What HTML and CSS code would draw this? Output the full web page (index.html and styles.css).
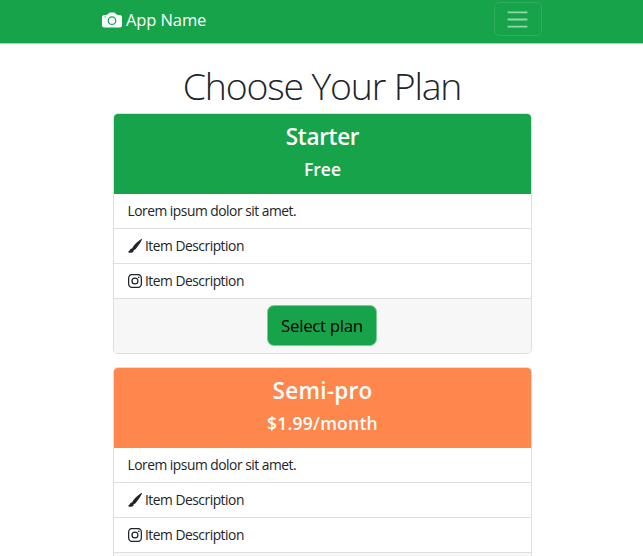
FILE: index.html
```html
<!DOCTYPE html>
<html lang="en">
<head>
<meta charset="utf-8">
<title>App Name</title>
<link rel="stylesheet" href="styles.css">
</head>
<body>
<svg class="sprite" aria-hidden="true">
  <symbol id="camera" viewBox="0 0 16 16"><path d="M10.5 8.5a2.5 2.5 0 1 1-5 0 2.5 2.5 0 0 1 5 0"/><path d="M2 4a2 2 0 0 0-2 2v6a2 2 0 0 0 2 2h12a2 2 0 0 0 2-2V6a2 2 0 0 0-2-2h-1.172a2 2 0 0 1-1.414-.586l-.828-.828A2 2 0 0 0 9.172 2H6.828a2 2 0 0 0-1.414.586l-.828.828A2 2 0 0 1 3.172 4zm.5 2a.5.5 0 1 1 0-1 .5.5 0 0 1 0 1m9 2.5a3.5 3.5 0 1 1-7 0 3.5 3.5 0 0 1 7 0"/></symbol>
  <symbol id="brush" viewBox="0 0 16 16"><path d="M15.825.12a.5.5 0 0 1 .132.584c-1.53 3.43-4.743 8.17-7.095 10.64a6.1 6.1 0 0 1-2.373 1.534c-.018.227-.06.538-.16.868-.201.659-.667 1.479-1.708 1.74a8.1 8.1 0 0 1-3.078.132 4 4 0 0 1-.562-.135 1.4 1.4 0 0 1-.466-.247.7.7 0 0 1-.204-.288.62.62 0 0 1 .004-.443c.095-.245.316-.38.461-.452.394-.197.625-.453.867-.826.095-.144.184-.297.287-.472l.117-.198c.151-.255.326-.54.546-.848.528-.739 1.201-.925 1.746-.896q.19.012.348.048c.062-.172.142-.38.238-.608.261-.619.658-1.419 1.187-2.069 2.176-2.67 6.18-6.206 9.117-8.104a.5.5 0 0 1 .596.04"/></symbol>
  <symbol id="instagram" viewBox="0 0 16 16"><path d="M8 0C5.829 0 5.556.01 4.703.048 3.85.088 3.269.222 2.76.42a3.9 3.9 0 0 0-1.417.923A3.9 3.9 0 0 0 .42 2.76C.222 3.268.087 3.85.048 4.7.01 5.555 0 5.827 0 8.001c0 2.172.01 2.444.048 3.297.04.852.174 1.433.372 1.942.205.526.478.972.923 1.417.444.445.89.719 1.416.923.51.198 1.09.333 1.942.372C5.555 15.99 5.827 16 8 16s2.444-.01 3.298-.048c.851-.04 1.434-.174 1.943-.372a3.9 3.9 0 0 0 1.416-.923c.445-.445.718-.891.923-1.417.197-.509.332-1.09.372-1.942C15.99 10.445 16 10.173 16 8s-.01-2.445-.048-3.299c-.04-.851-.175-1.433-.372-1.941a3.9 3.9 0 0 0-.923-1.417A3.9 3.9 0 0 0 13.24.42c-.51-.198-1.092-.333-1.943-.372C10.443.01 10.172 0 7.998 0zm-.717 1.442h.718c2.136 0 2.389.007 3.232.046.78.035 1.204.166 1.486.275.373.145.64.319.92.599s.453.546.598.92c.11.281.24.705.275 1.485.039.843.047 1.096.047 3.231s-.008 2.389-.047 3.232c-.035.78-.166 1.203-.275 1.485a2.5 2.5 0 0 1-.599.919c-.28.28-.546.453-.92.598-.28.11-.704.24-1.485.276-.843.038-1.096.047-3.232.047s-2.39-.009-3.233-.047c-.78-.036-1.203-.166-1.485-.276a2.5 2.5 0 0 1-.92-.598 2.5 2.5 0 0 1-.6-.92c-.109-.281-.24-.705-.275-1.485-.038-.843-.046-1.096-.046-3.233s.008-2.388.046-3.231c.036-.78.166-1.204.276-1.486.145-.373.319-.64.599-.92s.546-.453.92-.598c.282-.11.705-.24 1.485-.276.738-.034 1.024-.044 2.515-.045zm4.988 1.328a.96.96 0 1 0 0 1.92.96.96 0 0 0 0-1.92m-4.27 1.122a4.109 4.109 0 1 0 0 8.217 4.109 4.109 0 0 0 0-8.217m0 1.441a2.667 2.667 0 1 1 0 5.334 2.667 2.667 0 0 1 0-5.334"/></symbol>
</svg>
<nav class="navbar">
  <div class="navbar-inner">
    <a class="brand"><svg class="brand-icon"><use href="#camera"/></svg><span>App Name</span></a>
    <button class="toggler" aria-label="Toggle navigation"><svg viewBox="0 0 30 30"><path d="M4 7h22M4 15h22M4 23h22"/></svg></button>
  </div>
</nav>
<main class="plans">
  <h1 class="title">Choose Your Plan</h1>
  <section class="card">
    <header class="card-header starter">
      <h2>Starter</h2>
      <h3>Free</h3>
    </header>
    <ul class="features">
      <li>Lorem ipsum dolor sit amet.</li>
      <li><svg class="icon"><use href="#brush"/></svg><span>Item Description</span></li>
      <li><svg class="icon"><use href="#instagram"/></svg><span>Item Description</span></li>
    </ul>
    <footer class="card-footer"><button class="select">Select plan</button></footer>
  </section>
  <section class="card">
    <header class="card-header semipro">
      <h2>Semi-pro</h2>
      <h3>$1.99/month</h3>
    </header>
    <ul class="features">
      <li>Lorem ipsum dolor sit amet.</li>
      <li><svg class="icon"><use href="#brush"/></svg><span>Item Description</span></li>
      <li><svg class="icon"><use href="#instagram"/></svg><span>Item Description</span></li>
    </ul>
    <footer class="card-footer"></footer>
  </section>
</main>
</body>
</html>
```
FILE: styles.css
```css
* { box-sizing: border-box; }
body { margin: 0; height: 556px; overflow: hidden; display: flex; flex-direction: column; background: #fff; color: #212529; font-family: "Open Sans", "Noto Sans", sans-serif; }
h1, h2, h3, ul { margin: 0; padding: 0; }
.sprite { display: none; }
.navbar { flex: none; height: 44px; background: #16a34a; border-bottom: 1px solid #a2dab7; }
.navbar-inner { width: 440px; height: 39px; margin: 0 auto; padding-left: 1px; display: flex; align-items: center; justify-content: space-between; }
.brand { display: flex; align-items: center; gap: 4px; color: #fff; font-size: 16.5px; letter-spacing: -0.1px; }
.brand-icon { width: 20px; height: 20px; margin-left: -.5px; fill: #fff; }
.toggler { width: 48px; height: 34px; margin-top: -1px; padding: 0; display: flex; align-items: center; justify-content: center; background: none; border: 1px solid rgba(255,255,255,.1); border-radius: 5px; }
.toggler svg { width: 27px; height: 27px; fill: none; stroke: rgba(255,255,255,.55); stroke-width: 2; }
.plans { flex: 1; min-height: 0; width: 419px; margin: 0 0 0 113px; padding-top: 20px; overflow: hidden; }
.title { height: 49px; padding-right: 1px; line-height: 44px; text-align: center; font-size: 37.4px; font-weight: 300; letter-spacing: -1.15px; white-space: nowrap; }
.card { height: 241px; margin-bottom: 13px; display: flex; flex-direction: column; border: 1px solid #dfdfdf; border-radius: 5px; overflow: hidden; }
.card-header { flex: none; height: 80px; padding-top: 8px; color: #fff; text-align: center; }
.card-header h2 { height: 34px; line-height: 30px; font-size: 22.5px; font-weight: 600; }
.card-header h3 { line-height: 26px; font-size: 17.5px; font-weight: 600; }
.starter { background: #16a34a; }
.starter h2 { letter-spacing: -0.3px; }
.semipro { background: #ff864c; }
.semipro h2, .semipro h3 { letter-spacing: 0.25px; }
.features { flex: none; list-style: none; font-size: 13.8px; letter-spacing: -0.48px; }
.features li { height: 35px; padding: 0 0 1px 13.5px; display: flex; align-items: center; gap: 3.5px; border-bottom: 1px solid #dfdfdf; white-space: nowrap; }
.icon { width: 14px; height: 14px; fill: #212529; }
.card-footer { flex: 1; display: flex; align-items: center; justify-content: center; padding-right: 1px; background: #f7f7f7; }
.select { width: 110px; height: 41px; margin-top: -1px; padding: 0; background: #16a34a; border: 1px solid #7dcd98; border-radius: 7px; color: #000; font: 16.8px "Open Sans", "Noto Sans", sans-serif; letter-spacing: -0.27px; }
```
